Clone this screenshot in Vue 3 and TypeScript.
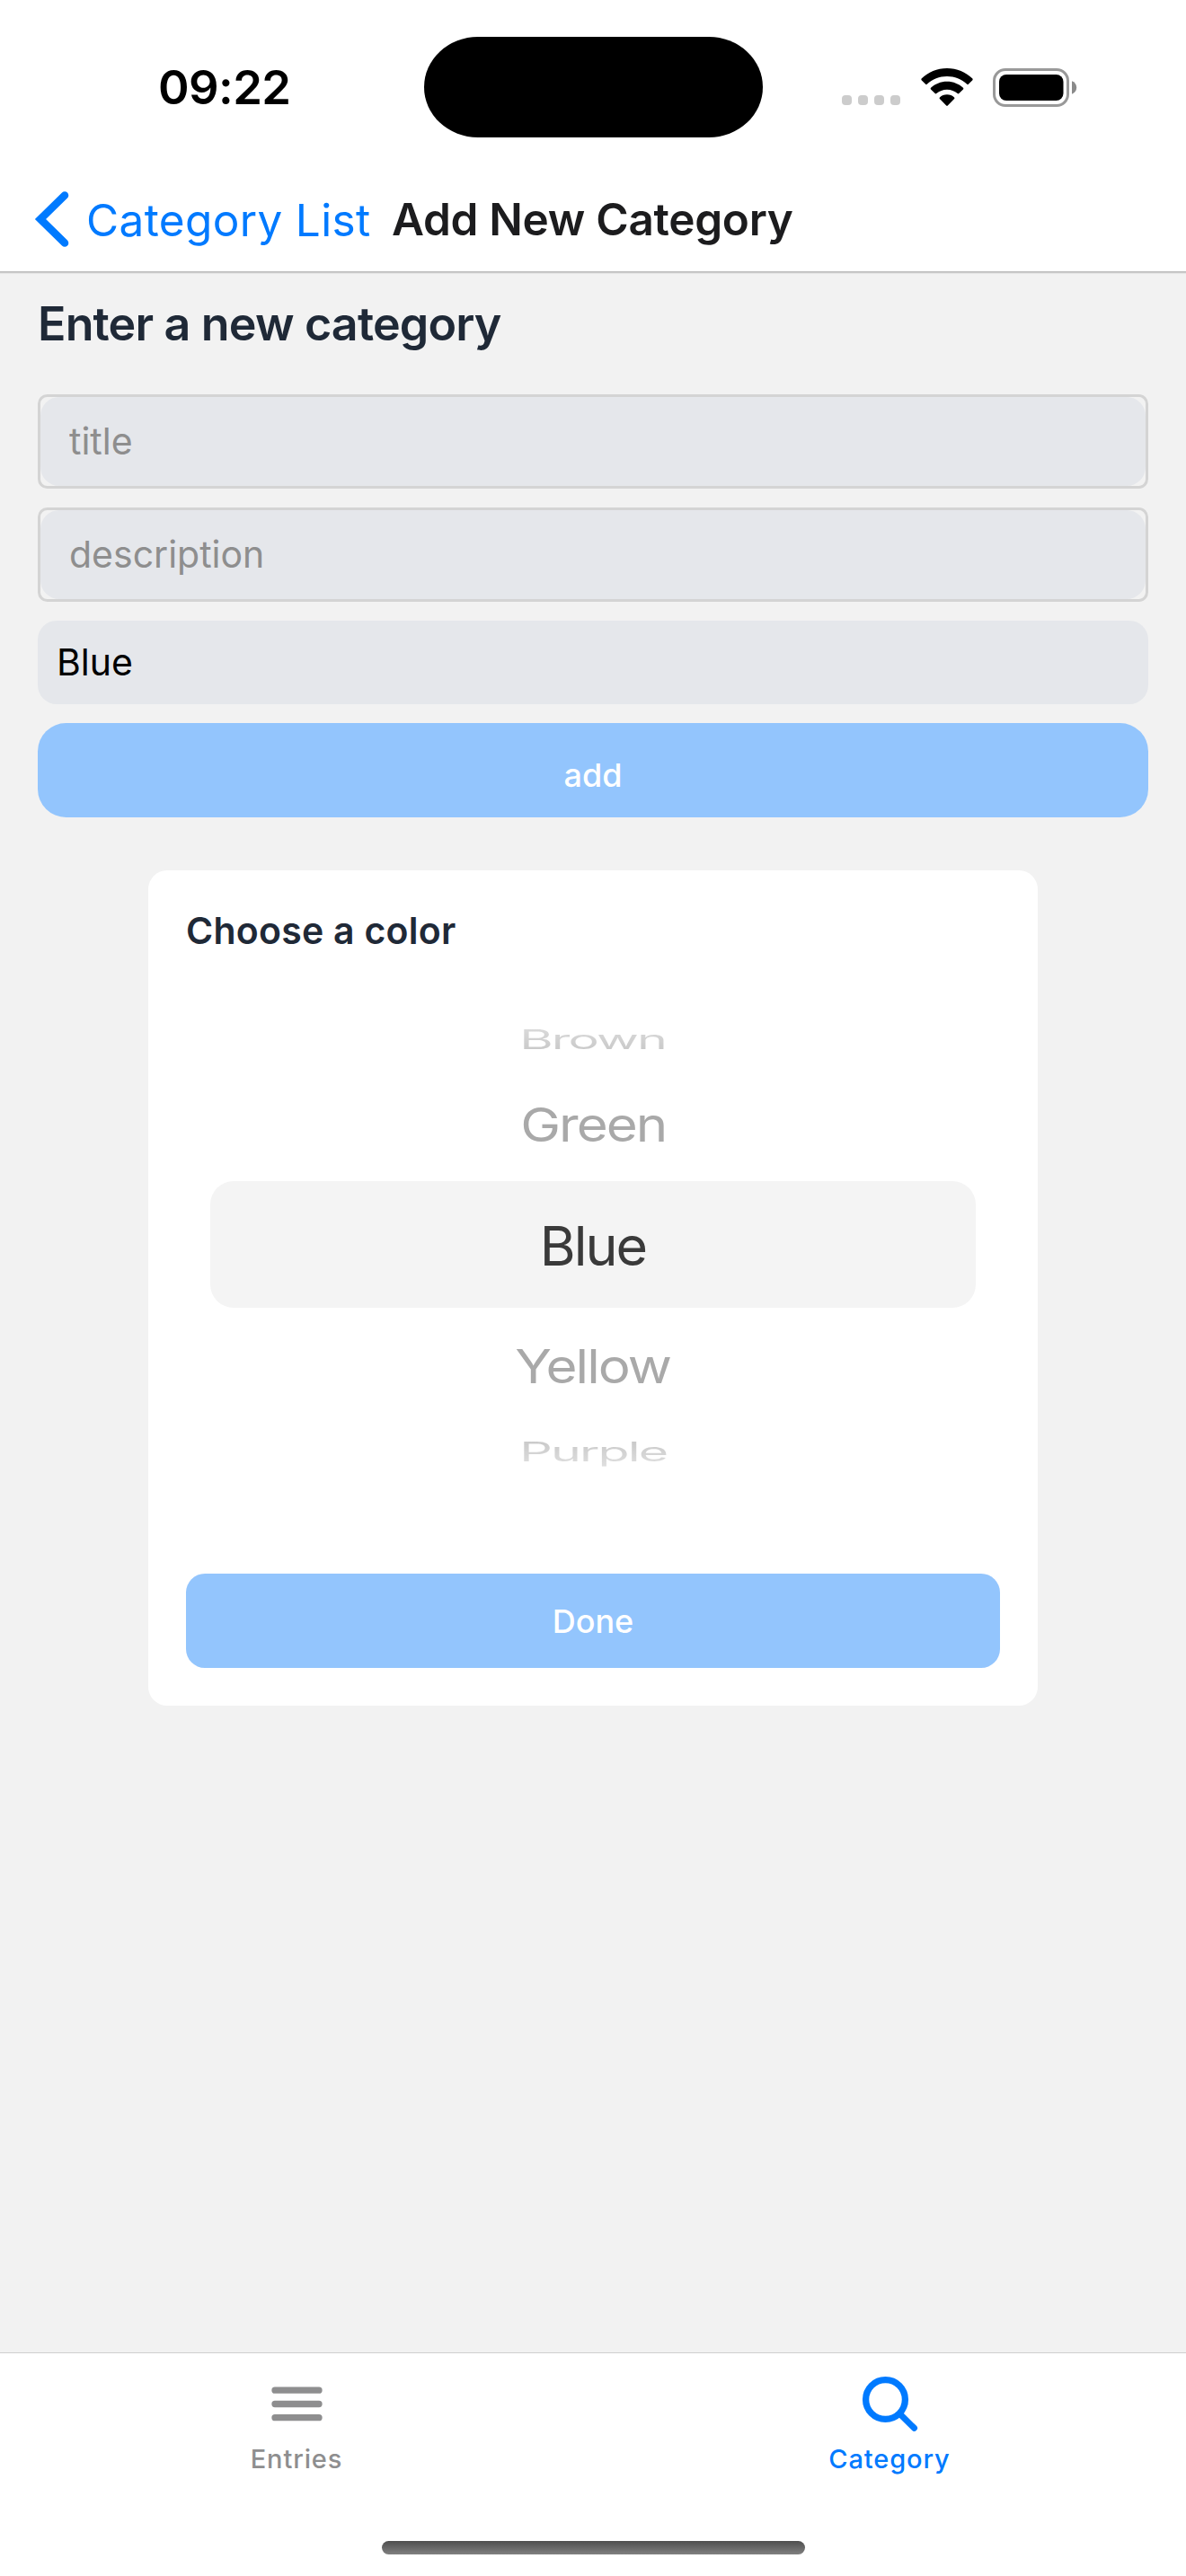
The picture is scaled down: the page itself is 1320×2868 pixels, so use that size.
<script setup lang="ts">
import { ref } from 'vue'

interface WheelItem {
  label: string
  kind: string
}

const time = '09:22'
const selected = ref<string>('Blue')
const title = ref<string>('')
const description = ref<string>('')

const wheel: WheelItem[] = [
  { label: 'Brown', kind: 'far-top' },
  { label: 'Green', kind: 'near-top' },
  { label: 'Blue', kind: 'current' },
  { label: 'Yellow', kind: 'near-bottom' },
  { label: 'Purple', kind: 'far-bottom' },
]
</script>

<template>
  <div class="screen">
    <header class="top">
      <div class="status">
        <div class="status-side left"><span class="time">{{ time }}</span></div>
        <div class="island"></div>
        <div class="status-side right">
          <div class="dots"><i></i><i></i><i></i><i></i></div>
          <svg class="wifi" width="58" height="43" viewBox="0 0 58 43">
            <path d="M29 0C40 0 50 4.300 57.400 11.600Q58 12.500 57.400 13.200L52.800 17.800Q52 18.500 51.300 17.800C45.200 12.100 37.500 9 29 9S12.800 12.100 6.700 17.800Q6 18.500 5.200 17.800L.6 13.200Q0 12.500 .6 11.600C8 4.300 18 0 29 0Z" />
            <path d="M29 14.800C36 14.800 42.300 17.500 47 21.800Q47.800 22.700 47 23.500L42.300 28.100Q41.500 28.800 40.700 28.100C37.500 25.300 33.500 23.700 29 23.700S20.500 25.300 17.300 28.100Q16.500 28.800 15.700 28.100L11 23.500Q10.200 22.700 11 21.800C15.700 17.500 22 14.800 29 14.800Z" />
            <path d="M29 29.300C32.200 29.300 35 30.500 37.100 32.400Q37.900 33.300 37.100 34.100L29.800 41.600Q29 42.300 28.200 41.600L20.900 34.100Q20.100 33.300 20.900 32.400C23 30.500 25.800 29.300 29 29.300Z" />
          </svg>
          <svg class="battery" width="94" height="43" viewBox="0 0 94 43">
            <rect x="1.500" y="1.500" width="82" height="40" rx="12.500" fill="none" stroke="#999" stroke-width="3" />
            <rect x="7" y="7" width="71.500" height="29" rx="8" />
            <path d="M88 14.300C91 15.400 93.200 18 93.200 21.500S91 27.600 88 28.700Z" fill="#8a8a8a" />
          </svg>
        </div>
      </div>
      <nav class="nav">
        <svg class="chevron" width="40" height="64" viewBox="0 0 40 64">
          <path d="M34 5.500L7 32L34 58.500" />
        </svg>
        <span class="back">Category List</span>
        <h1>Add New Category</h1>
      </nav>
    </header>

    <main>
      <h2>Enter a new category</h2>
      <div class="field"><input v-model="title" placeholder="title" /></div>
      <div class="field"><input v-model="description" placeholder="description" /></div>
      <div class="choice"><span>{{ selected }}</span></div>
      <button class="add"><span>add</span></button>

      <section class="card">
        <h3>Choose a color</h3>
        <div class="wheel">
          <div v-for="item in wheel" :key="item.label" class="row" :class="item.kind">
            <span>{{ item.label }}</span>
          </div>
        </div>
        <button class="done"><span>Done</span></button>
      </section>
    </main>

    <footer>
      <div class="tabs">
        <div class="tab">
          <svg width="72" height="72" viewBox="0 0 72 72" fill="none" stroke="currentColor" stroke-width="7.300" stroke-linecap="round">
            <path d="M12 21.200H61M12 36.500H61M12 51.700H61" />
          </svg>
          <span>Entries</span>
        </div>
        <div class="tab active">
          <svg width="72" height="72" viewBox="0 0 72 72" fill="none" stroke="currentColor" stroke-width="7.300" stroke-linecap="round">
            <circle cx="31.500" cy="31.500" r="21.900" />
            <path d="M48 48L63.500 63.300" stroke-width="7" />
          </svg>
          <span>Category</span>
        </div>
      </div>
      <div class="home"></div>
    </footer>
  </div>
</template>

<style>
html,
body {
  margin: 0;
  background: #f2f2f2;
}
</style>

<style scoped>
* {
  box-sizing: border-box;
}

.screen {
  width: 1320px;
  height: 2868px;
  display: flex;
  flex-direction: column;
  overflow: hidden;
  background: #f2f2f2;
  font-family: Inter, "Liberation Sans", sans-serif;
  white-space: nowrap;
}

h1,
h2,
h3 {
  margin: 0;
  font-weight: 600;
}

button {
  border: 0;
  padding: 0;
  font-family: inherit;
  color: #fff;
  background: #93c5fd;
}

.top {
  height: 305px;
  background: #fff;
  border-bottom: 1px solid #e6e6e6;
  box-shadow: inset 0 -1px #cbcbcb, inset 0 -2px #bdbdbd;
}

.status {
  height: 186px;
  padding-top: 41px;
  display: flex;
  align-items: flex-start;
}

.island {
  width: 377px;
  height: 112px;
  border-radius: 60px / 56px;
  background: #000;
}

.status-side {
  height: 112px;
  display: flex;
  align-items: center;
}

.left {
  width: 472px;
  padding-left: 176px;
}

.time {
  font-size: 52.5px;
  font-weight: 600;
  line-height: 60px;
  letter-spacing: -0.6px;
}

.right {
  flex: 1;
  padding-left: 88px;
}

.dots {
  display: flex;
  gap: 7px;
  margin-top: 29px;
}

.dots i {
  width: 11px;
  height: 11px;
  border-radius: 4px;
  background: #ccc;
}

.wifi {
  margin-left: 23px;
}

.battery {
  margin-left: 22px;
}

.nav {
  height: 116px;
  display: flex;
  align-items: center;
  padding-left: 38px;
}

.chevron path {
  fill: none;
  stroke: #007aff;
  stroke-width: 8.6px;
  stroke-linecap: round;
}

.back {
  margin-left: 18px;
  width: 340px;
  padding-top: 2px;
  font-size: 49.5px;
  letter-spacing: 0.35px;
  color: #007aff;
}

h1 {
  font-size: 49.5px;
  letter-spacing: -0.3px;
  color: #1c1c1e;
}

main {
  flex: 1;
  padding: 19px 42px 0;
  display: flex;
  flex-direction: column;
}

h2 {
  line-height: 74px;
  margin-bottom: 41px;
  font-size: 52px;
  letter-spacing: -0.85px;
  color: #1f2937;
}

.field {
  height: 105px;
  margin-bottom: 21px;
  border: 3px solid #d4d4d4;
  border-radius: 10.5px;
}

.field input {
  display: block;
  width: 100%;
  height: 99px;
  padding: 0 32px 2px;
  border: 0;
  outline: 0;
  border-radius: 21px;
  background: #e5e7eb;
  font-family: inherit;
  font-size: 41px;
}

.field input::placeholder {
  color: #8e8e8e;
  opacity: 1;
}

.choice {
  height: 93px;
  margin-bottom: 21px;
  padding: 0 21px 1px;
  display: flex;
  align-items: center;
  border-radius: 21px;
  background: #e5e7eb;
  font-size: 41px;
  color: #000;
}

.add {
  height: 105px;
  padding-top: 11px;
  border-radius: 31.5px;
  font-size: 36px;
  font-weight: 500;
}

.card {
  width: 990px;
  height: 930px;
  margin: 59px auto 0;
  padding: 42px;
  border-radius: 21px;
  background: #fff;
  display: flex;
  flex-direction: column;
}

h3 {
  line-height: 50px;
  font-size: 41px;
  letter-spacing: 0.25px;
  color: #1f2937;
}

.wheel {
  height: 691px;
  padding: 63px 27px 0;
}

.row {
  display: flex;
  align-items: center;
  justify-content: center;
  font-size: 61px;
  letter-spacing: -2px;
  color: #a9a9a9;
}

.row span {
  line-height: 70px;
}

.current {
  height: 141px;
  padding-top: 3px;
  border-radius: 26px;
  background: #f4f4f4;
  color: #3a3a3a;
}

.near-top {
  height: 126px;
}

.near-bottom {
  height: 129px;
}

.near-top span,
.near-bottom span {
  transform: scale(0.985, 0.86);
}

.far-top {
  height: 65px;
}

.far-bottom {
  height: 62px;
}

.far-top span,
.far-bottom span {
  transform: scale(0.94, 0.48);
  background: linear-gradient(#dadada 10px, #c9c9c9 60px);
  background-clip: text;
  color: transparent;
}

.far-bottom span {
  background: linear-gradient(#c9c9c9 10px, #dfdfdf 70px);
  background-clip: text;
}

.done {
  height: 105px;
  border-radius: 21px;
  font-size: 36px;
  font-weight: 500;
}

footer {
  height: 249px;
  border-top: 1px solid #d0d0d0;
  background: #fff;
}

.tabs {
  height: 209px;
  padding-top: 20px;
  display: flex;
}

.tab {
  width: 660px;
  display: flex;
  flex-direction: column;
  align-items: center;
  color: #8e8e8f;
  font-size: 29px;
  font-weight: 500;
}

.tab svg {
  display: block;
}

.tab span {
  margin-top: 6px;
  line-height: 40px;
  letter-spacing: 0.9px;
}

.active {
  color: #007aff;
}

.home {
  width: 471px;
  height: 15px;
  margin: 0 auto;
  border-radius: 7.5px;
  background: linear-gradient(#4e4e4e, #808080);
}
</style>
